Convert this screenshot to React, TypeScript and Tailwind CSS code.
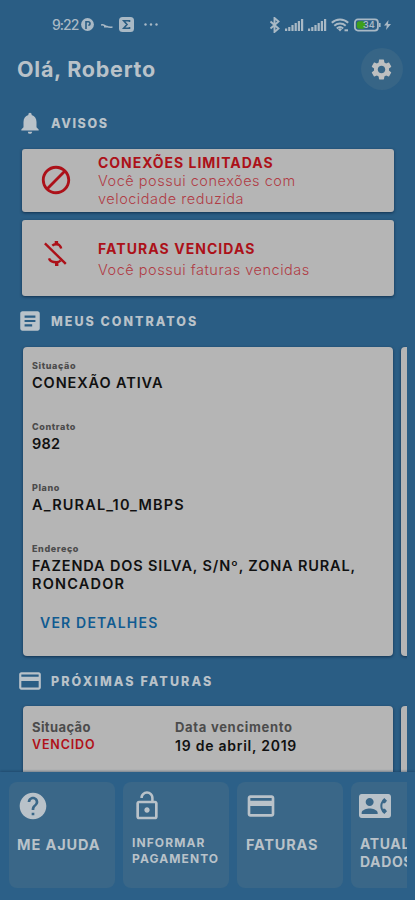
import type { ReactNode } from "react";
import {
  MdArticle,
  MdBlock,
  MdContactPhone,
  MdCreditCard,
  MdHelp,
  MdLockOpen,
  MdNotifications,
  MdSettings,
} from "react-icons/md";

type SectionTitleProps = {
  icon: ReactNode;
  className?: string;
  children: ReactNode;
};

const SectionTitle = ({ icon, className = "tracking-[1.6px]", children }: SectionTitleProps) => (
  <div className="flex h-[26px] items-center gap-[8px] pl-[17px] text-[#b9c2c9]">
    {icon}
    <h2 className={`${className} pt-[2px] text-[12.5px] font-extrabold whitespace-nowrap`}>{children}</h2>
  </div>
);

type FieldProps = {
  label: string;
  className?: string;
  children: ReactNode;
};

const Field = ({ label, className = "tracking-[0.9px]", children }: FieldProps) => (
  <div className="mb-[29px]">
    <p className="text-[9px] leading-3 font-extrabold tracking-[0.6px] text-[#4c4c4c]">{label}</p>
    <div className={`${className} pt-[2px] text-[14.5px] leading-[18px] font-semibold text-[#111]`}>{children}</div>
  </div>
);

const SignalBars = () => (
  <svg width="19" height="12" viewBox="0 0 19 12" fill="currentColor">
    <rect x="0" y="9.5" width="2.2" height="2.5" />
    <rect x="3.2" y="8" width="2.2" height="4" />
    <rect x="6.4" y="6" width="2.2" height="6" />
    <rect x="9.6" y="4" width="2.2" height="8" />
    <rect x="12.8" y="2" width="2.2" height="10" />
    <rect x="16" y="0" width="2.2" height="12" />
  </svg>
);

const NoMoney = () => (
  <svg width="24" height="28" viewBox="0 0 24 28" fill="none" stroke="currentColor" strokeWidth="2.4">
    <path d="M.9 3.3 21.800 23.900" />
    <path d="M8.300 5.600C10 4 14 3.700 15.500 5.300c.9.900 1.400 1.700 1.700 3.200" />
    <path d="M12.400 1v4" strokeWidth="3.400" />
    <path d="M5 18.300c.8 2.800 3.500 3.900 7.500 3.900 2 0 3.300-.7 4.200-1.700" />
    <path d="M12.700 22v4" strokeWidth="3.400" />
  </svg>
);

const StatusBar = () => (
  <div className="flex h-[49px] items-center pl-[52px] text-[#a9b9c5]">
    <span className="w-[29px] text-[14px] font-medium tracking-[-1px]">9:22</span>
    <svg width="13" height="13" viewBox="0 0 13 13">
      <circle cx="6.5" cy="6.5" r="6.4" fill="currentColor" />
      <path d="M5 11V3.800h2.300a1.700 1.700 0 0 1 0 3.400" fill="none" stroke="#2a5d82" strokeWidth="1.6" />
    </svg>
    <svg className="mt-[2px] ml-[7px]" width="12" height="6" viewBox="0 0 12 6" fill="none" stroke="currentColor" strokeWidth="1.5">
      <path d="M0 2.2c2-1.500 3 .3 5 1s3 1.500 6.500.8M3 3.800h4" />
    </svg>
    <svg className="ml-[6px]" width="15" height="15" viewBox="0 0 15 15">
      <rect width="15" height="15" rx="3.500" fill="currentColor" />
      <path d="M10.500 5V3.700H4.700L8 7.500l-3.300 3.800h5.800V10" fill="none" stroke="#2a5d82" strokeWidth="1.600" />
    </svg>
    <svg className="ml-[10px]" width="14" height="3" viewBox="0 0 14 3" fill="currentColor">
      <circle cx="1.500" cy="1.500" r="1.200" />
      <circle cx="7" cy="1.500" r="1.200" />
      <circle cx="12.500" cy="1.500" r="1.200" />
    </svg>
    <svg className="ml-[111px]" width="12" height="16" viewBox="0 0 12 16" fill="none" stroke="currentColor" strokeWidth="1.900">
      <path d="M1.500 4.500l8 7L5.500 15V1l4 3.500-8 7" />
    </svg>
    <span className="ml-[4px] flex gap-[4px]">
      <SignalBars />
      <SignalBars />
    </span>
    <svg className="ml-[4px]" width="18" height="14" viewBox="0 0 18 14" fill="none" stroke="currentColor" strokeWidth="2">
      <path d="M.8 4.800a12 12 0 0 1 16.400 0M3.300 7.800a8.500 8.500 0 0 1 11.400 0M5.800 10.400a5 5 0 0 1 6.400 0" />
      <path d="M7 11.200 9 13.500l2-2.300a3 3 0 0 0-4 0z" fill="currentColor" stroke="none" />
      <path d="M13.500 12.300h3.500" />
    </svg>
    <svg className="ml-[5px]" width="27" height="14" viewBox="0 0 27 14">
      <rect x=".9" y="1.400" width="23" height="11.200" rx="3" fill="none" stroke="currentColor" strokeWidth="1.800" />
      <rect x="2.800" y="3.300" width="8.500" height="7.400" rx="2.500" fill="#3fa01c" />
      <rect x="25" y="5" width="1.600" height="4" fill="currentColor" />
      <text x="9" y="10.200" fontSize="9" fontWeight="600" fill="currentColor">
        34
      </text>
    </svg>
    <svg className="ml-[3px]" width="7" height="10" viewBox="0 0 7 10" fill="currentColor">
      <path d="M4.500 0 0 5.600h2.800L2 10l5-6H4z" />
    </svg>
  </div>
);

const warnings = [
  {
    title: "CONEXÕES LIMITADAS",
    lines: ["Você possui conexões com", "velocidade reduzida"],
    icon: <MdBlock size={34} />,
    box: "h-[63px]",
    iconClass: "pb-[2px]",
    titleClass: "tracking-[0.98px]",
    gap: "",
  },
  {
    title: "FATURAS VENCIDAS",
    lines: ["Você possui faturas vencidas"],
    icon: <NoMoney />,
    box: "h-[76px] pt-[2px]",
    iconClass: "pb-[11px]",
    titleClass: "tracking-[1.06px]",
    gap: "mt-[3px]",
  },
];

const actions = [
  { icon: <MdHelp size={32} />, lines: ["ME AJUDA"], text: "text-[14.5px] leading-[19px] tracking-[0.9px]" },
  { icon: <MdLockOpen size={32} />, lines: ["INFORMAR", "PAGAMENTO"], text: "text-[12px] leading-[16px] tracking-[1.1px] pl-px" },
  { icon: <MdCreditCard size={32} />, lines: ["FATURAS"], text: "text-[14.5px] leading-[19px] tracking-[0.8px] pl-px" },
  { icon: <MdContactPhone size={32} />, lines: ["ATUALIZAR", "DADOS"], text: "text-[14px] leading-[18px] tracking-[0.6px] pl-px" },
];

const cardClass = "shrink-0 bg-[#b5b5b5] shadow-[0_1px_3px_rgba(0,20,45,0.6)]";

export default function App() {
  return (
    <div className="flex h-[900px] w-[415px] flex-col overflow-hidden bg-[#2a5d84] font-['Inter',sans-serif]">
      <StatusBar />
      <header className="flex h-10 items-center justify-between pr-[12px] pl-[17px]">
        <h1 className="text-[21.5px] font-bold tracking-[0.75px] text-[#b9c2c9]">Olá, Roberto</h1>
        <button className="flex size-[42px] items-center justify-center rounded-full bg-[#376586] pr-px text-[#bdbfc0]">
          <MdSettings size={25} />
        </button>
      </header>

      <main className="h-[683px] shrink-0 overflow-hidden pt-[21px]">
        <SectionTitle icon={<MdNotifications size={26} />}>AVISOS</SectionTitle>
        <div className="mt-[13px] flex flex-col gap-[8px] pr-[21px] pl-[22px]">
          {warnings.map((warning) => (
            <div key={warning.title} className={`${cardClass} ${warning.box} flex items-center rounded-[3px] text-[#ac1119]`}>
              <div className={`${warning.iconClass} flex w-[76px] shrink-0 justify-center pr-[9px]`}>{warning.icon}</div>
              <div className="whitespace-nowrap">
                <p className={`${warning.titleClass} text-[14px] leading-[18px] font-bold`}>{warning.title}</p>
                <div className={`${warning.gap} text-[14.5px] leading-[18px] font-light tracking-[0.52px] text-[#b03c45]`}>
                  {warning.lines.map((line) => (
                    <p key={line}>{line}</p>
                  ))}
                </div>
              </div>
            </div>
          ))}
        </div>

        <div className="mt-[12px]">
          <SectionTitle icon={<MdArticle size={26} />} className="tracking-[2px]">
            MEUS CONTRATOS
          </SectionTitle>
        </div>
        <div className="mt-[13px] flex h-[309px] w-[407px] gap-[8px] overflow-x-clip pl-[23px]">
          <div className={`${cardClass} w-[370px] rounded-[4px] px-[9px] pt-[13px]`}>
            <Field label="Situação">CONEXÃO ATIVA</Field>
            <Field label="Contrato" className="tracking-[0.2px]">
              982
            </Field>
            <Field label="Plano" className="tracking-[1.15px]">
              A_RURAL_10_MBPS
            </Field>
            <Field label="Endereço" className="tracking-[0.85px]">
              <p className="whitespace-nowrap">FAZENDA DOS SILVA, S/Nº, ZONA RURAL,</p>
              <p className="tracking-[1.2px]">RONCADOR</p>
            </Field>
            <button className="-mt-[8px] ml-[8px] block text-[14px] leading-[18px] font-semibold tracking-[1.2px] text-[#115b91]">
              VER DETALHES
            </button>
          </div>
          <div className={`${cardClass} w-[370px] rounded-[4px]`} />
        </div>

        <div className="mt-[12px]">
          <SectionTitle icon={<MdCreditCard size={26} />} className="tracking-[2.1px]">
            PRÓXIMAS FATURAS
          </SectionTitle>
        </div>
        <div className="mt-[12px] flex h-[120px] w-[407px] gap-[8px] overflow-x-clip pl-[23px]">
          <div className={`${cardClass} flex w-[370px] rounded-[4px] px-[9px] pt-[12px]`}>
            <div className="w-[143px]">
              <p className="text-[13px] leading-[18px] font-bold tracking-[0.4px] text-[#4c4c4c]">Situação</p>
              <p className="text-[12.5px] leading-[18px] font-semibold tracking-[0.85px] text-[#b01119]">VENCIDO</p>
            </div>
            <div>
              <p className="text-[13px] leading-[18px] font-bold tracking-[0.7px] text-[#4c4c4c]">Data vencimento</p>
              <p className="text-[14px] leading-[20px] font-semibold tracking-[0.75px] text-[#111]">19 de abril, 2019</p>
            </div>
          </div>
          <div className={`${cardClass} w-[370px] rounded-[4px]`} />
        </div>
      </main>

      <nav className="relative flex h-[128px] w-full shrink-0 bg-[#2c6088] pt-[10px] shadow-[0_-1px_2px_rgba(20,50,80,0.4)]">
        <div className="flex w-[407px] gap-[8px] overflow-hidden pl-[9px]">
          {actions.map((action) => (
            <button
              key={action.lines[0]}
              className="flex h-[106px] w-[106px] shrink-0 flex-col items-start rounded-[8px] bg-[#3a6788] pt-[8px] pl-[8px] text-left text-[#b9c2c9]"
            >
              {action.icon}
              <div className={`${action.text} mt-[13px] font-bold whitespace-nowrap`}>
                {action.lines.map((line) => (
                  <p key={line}>{line}</p>
                ))}
              </div>
            </button>
          ))}
        </div>
      </nav>
    </div>
  );
}
